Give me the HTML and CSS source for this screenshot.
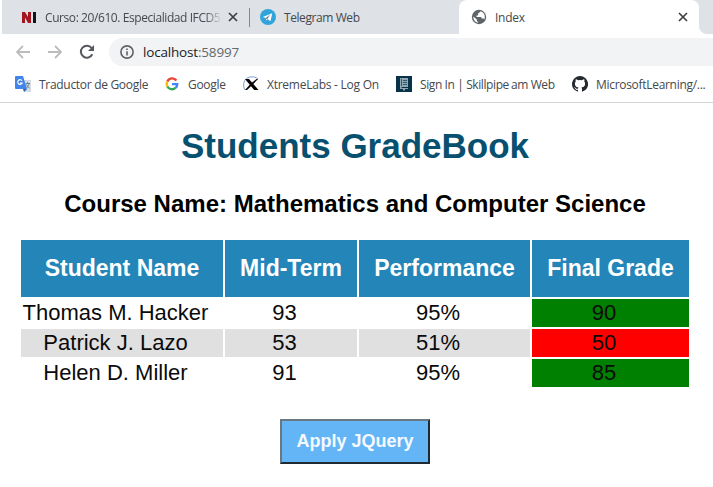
FILE: index.html
```html
<!DOCTYPE html>
<html lang="es">
<head>
<meta charset="utf-8">
<title>Index</title>
<link rel="stylesheet" href="styles.css">
</head>
<body>
<header class="browser">
  <div class="tabs">
    <div class="tab tab-course">
      <svg class="icon" viewBox="0 0 16 16"><path fill="#a3161f" d="M1 3h3l3 5V3h3v11H7L4 8.500V14H1z"/><path fill="#151515" d="M12 3h3v11h-3z"/></svg>
      <span class="label fade">Curso: 20/610. Especialidad IFCD5</span>
      <svg class="close" viewBox="0 0 10 10"><path d="M1 1l8 8M9 1l-8 8"/></svg>
    </div>
    <div class="tab tab-telegram">
      <svg class="icon" viewBox="0 0 16 16"><circle cx="8" cy="8" r="8" fill="#31a4dc"/><path fill="#fff" d="M2.800 8L12.200 4.200 10.500 12.200 7.500 10 6.200 11.500 5.800 9z"/><path stroke="#a9cde4" stroke-width=".7" d="M6 9l4-3-3 4"/></svg>
      <span class="label">Telegram Web</span>
    </div>
    <div class="tab tab-active">
      <svg class="icon globe" viewBox="0 0 16 16"><circle cx="8" cy="8" r="7.200" fill="#5f6368"/><path fill="#fff" d="M9.500 2.300c-.2 1.500-1.900 1.200-2.400 2.200-.3.700.5 1.400-.4 2.100H5.500v1.500h4c.9 0 1.100.6 1.100 1.500h1.500c.8 0 1.100.5 1 1.100 1.800-3.200.3-7.200-3.600-8.400zM2.400 7.400l3.400 3.200v.9c0 .7.6 1.200 1.400 1.300v.8C4.200 13.200 2 10.500 2.400 7.400z"/></svg>
      <span class="label">Index</span>
      <svg class="close" viewBox="0 0 10 10"><path d="M1 1l8 8M9 1l-8 8"/></svg>
    </div>
    <div class="tab-rest"></div>
  </div>
  <div class="toolbar">
    <svg class="nav arrow" viewBox="0 0 16 16"><path d="M15 8H2M8 2L2 8l6 6"/></svg>
    <svg class="nav arrow" viewBox="0 0 16 16"><path d="M1 8h13M8 2l6 6-6 6"/></svg>
    <svg class="nav reload" viewBox="0 0 16 16"><path d="M13.300 10.300A6 6 0 1 1 12.600 4"/><path class="tip" d="M15 1v6H9z"/></svg>
    <div class="address">
      <svg class="info" viewBox="0 0 14 14"><circle cx="7" cy="7" r="6.100"/><path d="M7 6.200v4.300M7 3.400v1.500"/></svg>
      <span class="url">localhost<span class="port">:58997</span></span>
    </div>
  </div>
  <nav class="bookmarks">
    <a class="mark m-translate"><svg class="icon" viewBox="0 0 16 16"><path fill="#d4dce6" d="M7 4h9v12H9z"/><path fill="#4285e8" d="M1 0h7l4 13H1Q0 13 0 12V1Q0 0 1 0z"/><path fill="#2f61b5" d="M8 13h4l-3 3z"/><path fill="none" stroke="#fff" stroke-width="1.200" d="M7 4.700A2.300 2.300 0 1 0 7.200 7H5"/><path fill="none" stroke="#6d8294" d="M10.500 7.500H15M12.500 6v1.500M14 8c-.5 2-1.500 3-2.500 4M11.500 8.500c.8 1.800 1.800 2.800 3 3.500"/></svg><span>Traductor de Google</span></a>
    <a class="mark m-google"><svg class="icon g" viewBox="0 0 16 16"><g fill="none" stroke-width="2.700"><path stroke="#ea4335" d="M13 4A6 6 0 0 0 2.700 5.200"/><path stroke="#fbbc05" d="M2.700 5.200a6 6 0 0 0 0 5.600"/><path stroke="#34a853" d="M2.700 10.800A6 6 0 0 0 12 12.500"/><path stroke="#4285f4" d="M12 12.500C13.400 11.300 14 10 14 8.200H8"/></g></svg><span>Google</span></a>
    <a class="mark m-labs"><svg class="icon" viewBox="0 0 16 16"><path fill="none" stroke="#7d9bcf" d="M2 14C-1 9 1 2 7 1c3-.5 6 0 8 2"/><path fill="#050505" d="M2 3h4l3 3.500L13.500 3H15l-4.700 5 5.200 6h-4.300L8 10.200 4 14H2l4.700-5.300z"/></svg><span>XtremeLabs - Log On</span></a>
    <a class="mark m-skill"><svg class="icon" viewBox="0 0 16 16"><path fill="#073247" d="M0 0h16v16H0z"/><path fill="#8fa7b2" d="M4 2h8v9H5.500v1H12v1H9v2l-1-1-1 1v-2H4z"/><path stroke="#35596a" d="M5.500 3v7M7 4.500h4M7 6.500h4M7 8.500h4"/></svg><span class="signin">Sign In | Skillpipe</span><span class="tail">am Web</span></a>
    <a class="mark m-github"><svg class="icon" viewBox="0 0 16 16"><path fill="#24292e" d="M8 0a8 8 0 0 0-2.530 15.590c.4.070.55-.17.55-.380v-1.340c-2.230.48-2.690-1.070-2.690-1.070-.36-.92-.89-1.170-.89-1.170-.73-.5.050-.49.050-.49.810.06 1.230.83 1.230.83.720 1.220 1.870.87 2.330.66.070-.52.280-.87.500-1.070-1.770-.2-3.640-.89-3.640-3.950 0-.87.310-1.590.82-2.150-.08-.2-.35-1.020.08-2.120 0 0 .67-.21 2.200.82a7.600 7.600 0 0 1 4 0c1.530-1.030 2.200-.82 2.200-.82.440 1.100.16 1.920.08 2.120.51.560.82 1.280.82 2.150 0 3.070-1.870 3.750-3.650 3.950.290.25.54.73.54 1.480v2.190c0 .21.150.46.550.38A8 8 0 0 0 8 0z"/></svg><span>MicrosoftLearning/...</span></a>
  </nav>
</header>
<main class="page">
  <h1>Students GradeBook</h1>
  <h2>Course Name: Mathematics and Computer Science</h2>
  <table class="grades">
    <thead><tr><th class="c-name">Student Name</th><th class="c-mid">Mid-Term</th><th class="c-perf">Performance</th><th class="c-final">Final Grade</th></tr></thead>
    <tbody>
      <tr><td>Thomas M. Hacker</td><td>93</td><td>95%</td><td class="pass">90</td></tr>
      <tr class="alt"><td>Patrick J. Lazo</td><td>53</td><td>51%</td><td class="fail">50</td></tr>
      <tr><td>Helen D. Miller</td><td>91</td><td>95%</td><td class="pass">85</td></tr>
    </tbody>
  </table>
  <button class="apply">Apply JQuery</button>
</main>
</body>
</html>
```
FILE: styles.css
```css
* { box-sizing: border-box; }
body { margin: 0; width: 713px; height: 487px; overflow: hidden; background: #fff; font-family: "Liberation Sans", Arial, sans-serif; }
svg { display: block; flex: none; }
.browser { height: 103px; border-bottom: 1px solid #d5d5d7; font: 12px "Open Sans", "Noto Sans", sans-serif; color: #45484c; }
.tabs { display: flex; height: 34px; margin-left: 2px; background: linear-gradient(90deg, #dee1e6 600px, #fff 600px); }
.tab { display: flex; align-items: center; height: 34px; background: #dee1e6; }
.icon { width: 16px; height: 16px; }
.label { white-space: nowrap; letter-spacing: -0.42px; }
.close { width: 10px; height: 10px; fill: none; stroke: #3c4043; stroke-width: 1.7; }
.tab-course { width: 247px; padding-left: 19px; }
.tab-course .label { width: 180px; margin: 0 3px 0 8px; }
.fade { -webkit-mask-image: linear-gradient(90deg, #000 160px, transparent 177px); mask-image: linear-gradient(90deg, #000 160px, transparent 177px); }
.tab-telegram { width: 210px; padding-left: 11px; gap: 8px; background: linear-gradient(#84878b, #84878b) 0 8px / 1px 19px no-repeat, #dee1e6; }
.tab-active { width: 240px; padding: 0 11px 0 12px; gap: 8px; background: #fff; border-radius: 8px 8px 0 0; box-shadow: 0 -8px 0 #dee1e6; background-clip: padding-box; }
.tab-active .label { letter-spacing: -0.25px; }
.tab-active .close { margin-left: auto; }
.tabs { background: #dee1e6; }
.tab-rest { flex: 1; background: radial-gradient(circle at 8px 26px, #dee1e6 7.5px, #fff 8.5px) 0 26px / 8px 8px no-repeat, #dee1e6; background: radial-gradient(circle at 8px 0, #dee1e6 7.5px, #fff 8.5px) 0 26px / 8px 8px no-repeat; }
.toolbar { display: flex; align-items: center; height: 36px; padding-left: 15px; }
.nav { width: 16px; height: 16px; fill: none; stroke-width: 1.8; }
.arrow { margin-right: 16px; stroke: #babcbe; }
.reload { stroke: #55595d; stroke-width: 2; }
.reload .tip { fill: #55595d; stroke: none; }
.address { display: flex; align-items: center; flex: 1; height: 28px; margin-left: 14px; padding-left: 11px; border-radius: 14px 0 0 14px; background: #f1f3f4; }
.info { width: 14px; height: 14px; fill: none; stroke: #5f6368; stroke-width: 1.6; }
.url { margin-left: 9px; font-size: 13.5px; letter-spacing: -0.18px; color: #202124; }
.port { color: #65696e; }
.bookmarks { display: flex; align-items: center; height: 28px; padding-left: 15px; }
.mark { display: flex; align-items: center; gap: 8px; white-space: nowrap; letter-spacing: -0.3px; }
.m-translate { width: 149px; }
.m-google { width: 79px; gap: 9px; }
.g { width: 14px; height: 14px; margin-left: 1px; }
.m-labs { width: 153px; letter-spacing: -0.25px; }
.m-skill { width: 176px; letter-spacing: -0.4px; }
.tail { margin-left: -6px; }
h1 { margin: 0; padding-top: 23px; font-size: 35px; line-height: 40px; color: #07506f; text-align: center; }
h2 { margin: 24px 0 0; font-size: 24px; line-height: 28px; color: #000; text-align: center; }
.page { display: flex; flex-direction: column; align-items: center; width: 710px; }
.grades { width: 672px; margin-top: 20px; table-layout: fixed; border-collapse: separate; border-spacing: 2px; font-size: 22px; text-align: center; }
th { height: 57px; padding: 0; background: #2486b8; color: #fff; font-size: 23px; line-height: 27px; }
.c-name { width: 202px; }
.c-mid { width: 132px; }
.c-perf { width: 171px; }
.c-final { width: 157px; }
td { height: 28px; padding: 0 14px 0 1px; line-height: 26px; white-space: nowrap; color: #0a0a0a; }
.alt td { background: #e0e0e0; }
.grades .pass { background: #008000; }
.grades .fail { background: #f00; }
.apply { width: 150px; height: 45px; margin-top: 30px; padding: 0; border: 2px solid; border-color: #6b7780 #202a33 #202a33 #6b7780; background: #64b5f6; color: #f4faff; font: bold 18px "Liberation Sans", Arial, sans-serif; }
```
